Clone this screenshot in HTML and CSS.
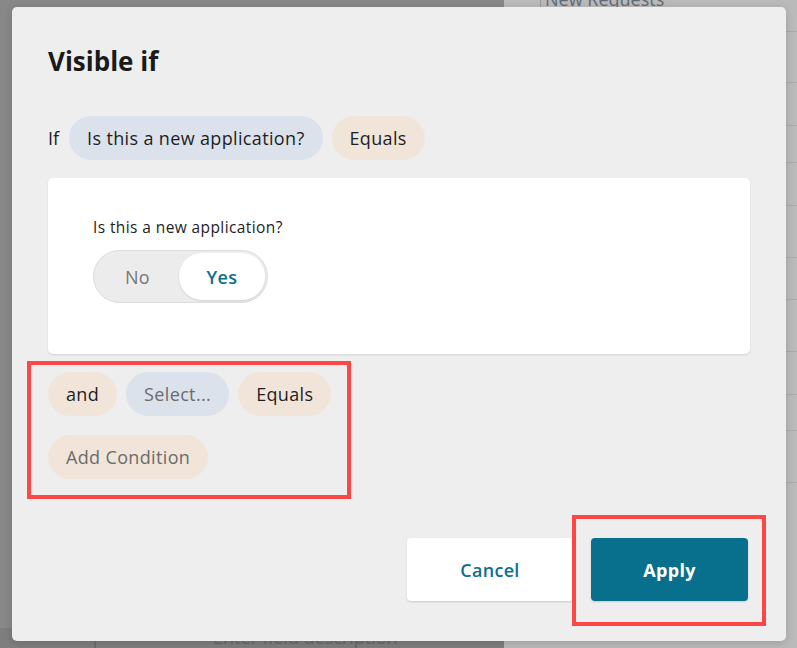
FILE: index.html
```html
<!DOCTYPE html>
<html>
<head>
<meta charset="utf-8">
<link rel="stylesheet" href="styles.css">
</head>
<body>
<div class="bg">
  <div class="bg-left">
    <div class="bg-left-spacer"></div>
    <div class="bg-field"><span class="bg-bar"></span><span class="bg-desc">Enter field description</span></div>
  </div>
  <div class="bg-right">
    <div class="bg-row bg-row-first"><span class="bg-title">New Requests</span></div>
    <div class="bg-row h51"></div>
    <div class="bg-row h43"></div>
    <div class="bg-row h37"></div>
    <div class="bg-row h43"></div>
    <div class="bg-row h52"></div>
    <div class="bg-row h42"></div>
    <div class="bg-row h52"></div>
    <div class="bg-row h43"></div>
    <div class="bg-row h36"></div>
    <div class="bg-row h52"></div>
  </div>
</div>

<div class="modal">
  <h1 class="title">Visible if</h1>
  <div class="pill-row if-row">
    <span class="if-label">If</span>
    <span class="pill blue">Is this a new application?</span>
    <span class="pill beige">Equals</span>
  </div>
  <div class="card">
    <div class="card-label">Is this a new application?</div>
    <div class="toggle">
      <span class="opt">No</span>
      <span class="opt on">Yes</span>
    </div>
  </div>
  <div class="conditions">
    <div class="pill-row">
      <span class="pill beige">and</span>
      <span class="pill blue muted">Select...</span>
      <span class="pill beige">Equals</span>
    </div>
    <div class="pill-row">
      <span class="pill beige muted">Add Condition</span>
    </div>
  </div>
  <div class="footer">
    <button class="btn cancel">Cancel</button>
    <button class="btn apply">Apply</button>
  </div>
</div>

<div class="mark mark-cond"></div>
<div class="mark mark-apply"></div>
</body>
</html>
```

FILE: styles.css
```css
html, body {
  margin: 0;
  padding: 0;
}
body {
  width: 797px;
  height: 648px;
  overflow: hidden;
  position: relative;
  font-family: "Open Sans", "Noto Sans", sans-serif;
  color: #1c1c1c;
}

/* dimmed page behind */
.bg {
  display: flex;
  width: 797px;
  height: 648px;
}
.bg-left {
  width: 504px;
  background: #888888;
  display: flex;
  flex-direction: column;
}
.bg-left-spacer { flex: 1; }
.bg-field {
  height: 20px;
  display: flex;
  align-items: flex-start;
  background: #7e7e7e;
}
.bg-bar {
  width: 2px;
  height: 20px;
  margin-left: 94px;
  background: #6a6f72;
}
.bg-desc {
  margin-left: 117px;
  margin-top: -3px;
  font-size: 18px;
  color: #676767;
}
.bg-right {
  flex: 1;
  background: #bababa;
  display: flex;
  flex-direction: column;
}
.bg-row {
  border-bottom: 1px solid #a9a9a9;
  flex: none;
}
.bg-row-first {
  height: 31px;
  position: relative;
  overflow: hidden;
}
.bg-title {
  position: absolute;
  left: 36px;
  top: -13px;
  padding-left: 4px;
  border-left: 1px solid #999;
  font-size: 18px;
  color: #5f6b75;
}
.h51 { height: 50px; }
.h43 { height: 42px; }
.h37 { height: 36px; }
.h52 { height: 51px; }
.h42 { height: 41px; }
.h36 { height: 35px; }

/* modal */
.modal {
  position: absolute;
  left: 12px;
  top: 7px;
  width: 774px;
  height: 634px;
  box-sizing: border-box;
  background: #eeeeee;
  border-radius: 5px;
  padding: 36px 36px 0;
  display: flex;
  flex-direction: column;
  box-shadow: 0 2px 8px rgba(0,0,0,0.15);
}
.title {
  margin: 0;
  font-size: 26px;
  line-height: 36px;
  font-weight: 700;
  color: #1a1a1a;
}
.pill-row {
  display: flex;
  align-items: center;
  gap: 9px;
}
.if-row {
  margin-top: 37px;
  gap: 9px;
}
.if-label {
  font-size: 18px;
  margin-right: 1px;
}
.pill {
  height: 44px;
  line-height: 44px;
  padding: 0 18px;
  border-radius: 22px;
  font-size: 18px;
  letter-spacing: 0.35px;
  color: #1e1e1e;
  white-space: nowrap;
}
.blue { background: #dce2ec; }
.beige { background: #f1e5da; }
.muted { color: #6b6b6b; }

.card {
  margin-top: 18px;
  height: 176px;
  box-sizing: border-box;
  background: #ffffff;
  border-radius: 5px;
  box-shadow: 0 1px 2px rgba(0,0,0,0.12);
  padding: 39px 45px 0;
}
.card-label {
  font-size: 15.5px;
  line-height: 20px;
  letter-spacing: 0.4px;
  color: #1e1e1e;
}
.toggle {
  margin-top: 13px;
  width: 175px;
  height: 53px;
  box-sizing: border-box;
  border: 1px solid #dcdcdc;
  border-radius: 27px;
  background: #ececec;
  padding: 2px;
  display: flex;
}
.opt {
  flex: 1;
  display: flex;
  align-items: center;
  justify-content: center;
  font-size: 18px;
  letter-spacing: 0.35px;
  color: #777777;
}
.opt.on {
  flex: none;
  width: 86px;
  background: #ffffff;
  border-radius: 23px;
  color: #0b6f8e;
  font-weight: 600;
  box-shadow: 0 1px 2px rgba(0,0,0,0.12);
}

.conditions {
  margin-top: 18px;
  display: flex;
  flex-direction: column;
  align-items: flex-start;
  gap: 19px;
}

.footer {
  margin-top: auto;
  margin-bottom: 40px;
  margin-right: 2px;
  display: flex;
  justify-content: flex-end;
  gap: 18px;
}
.btn {
  height: 63px;
  border: none;
  border-radius: 4px;
  font-family: "Open Sans", "Noto Sans", sans-serif;
  font-size: 18px;
  letter-spacing: 0.3px;
  cursor: pointer;
}
.cancel {
  width: 166px;
  background: #ffffff;
  color: #0e6f8d;
  font-weight: 600;
  box-shadow: 0 1px 2px rgba(0,0,0,0.15);
}
.apply {
  width: 157px;
  background: #08708d;
  color: #ffffff;
  font-weight: 700;
  box-shadow: 0 1px 2px rgba(0,0,0,0.15);
}

/* annotation highlights */
.mark {
  position: absolute;
  border: 4px solid #ff4646;
  box-sizing: border-box;
}
.mark-cond {
  left: 27px;
  top: 361px;
  width: 324px;
  height: 138px;
}
.mark-apply {
  left: 572px;
  top: 515px;
  width: 194px;
  height: 111px;
}
```
